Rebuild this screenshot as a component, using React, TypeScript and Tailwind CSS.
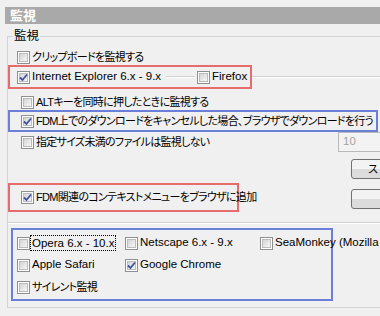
import React from 'react'

const Cb: React.FC<{ checked?: boolean }> = ({ checked }) => (
  <span className="relative inline-flex w-[13px] h-[13px] shrink-0 border border-[#8e8f8f] bg-white p-px">
    <span className="block w-full h-full bg-linear-to-br from-[#d4d4d4] to-[#f7f7f7] border border-[#bcbcbc]" />
    {checked && (
      <svg className="absolute inset-0 m-auto" width="11" height="11" viewBox="0 0 11 11">
        <path d="M2 5.5 L4.5 8 L9 2.5" fill="none" stroke="#3f52a0" strokeWidth="1.8" />
      </svg>
    )}
  </span>
)

const Item: React.FC<{ checked?: boolean; jp?: boolean; children: React.ReactNode; className?: string }> = ({
  checked,
  jp,
  children,
  className = '',
}) => (
  <div className={`flex items-center gap-[2px] h-[16px] shrink-0 whitespace-nowrap ${className}`}>
    <Cb checked={checked} />
    <span className={jp ? 'text-[11px] tracking-[-0.7px]' : ''}>{children}</span>
  </div>
)

const Line: React.FC<{ className?: string }> = ({ className = '' }) => (
  <div className={`h-[2px] border-t border-[#d0d0d0] border-b border-b-white ${className}`} />
)

const App: React.FC = () => {
  return (
    <div className="w-[380px] h-[316px] overflow-hidden bg-[#f0f0f0] text-[11.5px] text-black font-['Liberation_Sans','Noto_Sans_CJK_JP',sans-serif] [font-feature-settings:'palt']">
      <div className="pt-[7px] pl-[5px]">
        <div className="h-[17px] bg-[#a9a9a9] flex items-center pl-[5px] text-white font-bold text-[13px]">
          監視
        </div>
      </div>

      <div className="relative ml-[7px] mt-[12px] w-[400px] h-[272px] border border-[#d3d3d3]">
        <span className="absolute -top-[9px] left-[5px] px-px bg-[#f0f0f0] text-[12.5px] leading-[16px]">
          監視
        </span>

        <Item jp className="mt-[12px] pl-[9px]">クリップボードを監視する</Item>

        <div className="flex items-center h-[24px]">
          <div className="w-[244px] h-full shrink-0 border-2 border-[#e46c6c] flex items-center pl-[7px]">
            <div className="w-[180px] shrink-0 flex items-center">
              <Item checked>Internet Explorer 6.x - 9.x</Item>
              <Line className="flex-1 ml-[5px] mr-[2px]" />
            </div>
            <Item>Firefox</Item>
          </div>
          <Line className="flex-1" />
        </div>

        <Item jp className="mt-[5px] pl-[13px]">ALTキーを同時に押したときに監視する</Item>

        <div className="w-[370px] h-[22px] border-2 border-[#6b7fd8] flex items-center pl-[11px] overflow-hidden">
          <Item jp checked>FDM上でのダウンロードをキャンセルした場合、ブラウザでダウンロードを行う</Item>
        </div>

        <div className="flex items-center h-[20px] pl-[13px]">
          <div className="w-[317px] shrink-0">
            <Item jp>指定サイズ未満のファイルは監視しない</Item>
          </div>
          <div className="w-[60px] h-[20px] shrink-0 border border-[#b9b9b9] bg-[#f3f3f3] text-[#a3a3a3] flex items-center pl-[4px]">
            10
          </div>
        </div>

        <div className="mt-[7px] pl-[343px]">
          <div className="w-[80px] h-[20px] rounded-[3px] border border-[#707070] bg-linear-to-b from-[#f3f3f3] from-50% to-[#dcdcdc] to-50% flex items-center pl-[16px] text-[11px]">
            ス
          </div>
        </div>

        <div className="mt-[4px] flex items-start">
          <div className="w-[231px] h-[29px] shrink-0 border-2 border-[#e46c6c] flex items-center pl-[11px]">
            <Item jp checked>FDM関連のコンテキストメニューをブラウザに追加</Item>
          </div>
          <div className="ml-[112px] mt-[6px] w-[80px] h-[20px] shrink-0 rounded-[3px] border border-[#707070] bg-linear-to-b from-[#f3f3f3] from-50% to-[#dcdcdc] to-50%" />
        </div>

        <Line className="mt-[10px]" />

        <div className="mt-[4px] ml-[3px] w-[322px] h-[73px] border-2 border-[#6b7fd8] pt-[5px] pl-[4px] flex flex-col gap-[6px]">
          <div className="flex">
            <div className="w-[108px] shrink-0 flex items-center gap-[1px] h-[16px] whitespace-nowrap">
              <Cb />
              <span className="outline outline-dotted outline-black px-px leading-[14px]">Opera 6.x - 10.x</span>
            </div>
            <Item className="w-[135px]">Netscape 6.x - 9.x</Item>
            <Item>SeaMonkey (Mozilla Suite)</Item>
          </div>
          <div className="flex">
            <Item className="w-[108px]">Apple Safari</Item>
            <Item checked>Google Chrome</Item>
          </div>
          <Item jp>サイレント監視</Item>
        </div>
      </div>
    </div>
  )
}

export default App
